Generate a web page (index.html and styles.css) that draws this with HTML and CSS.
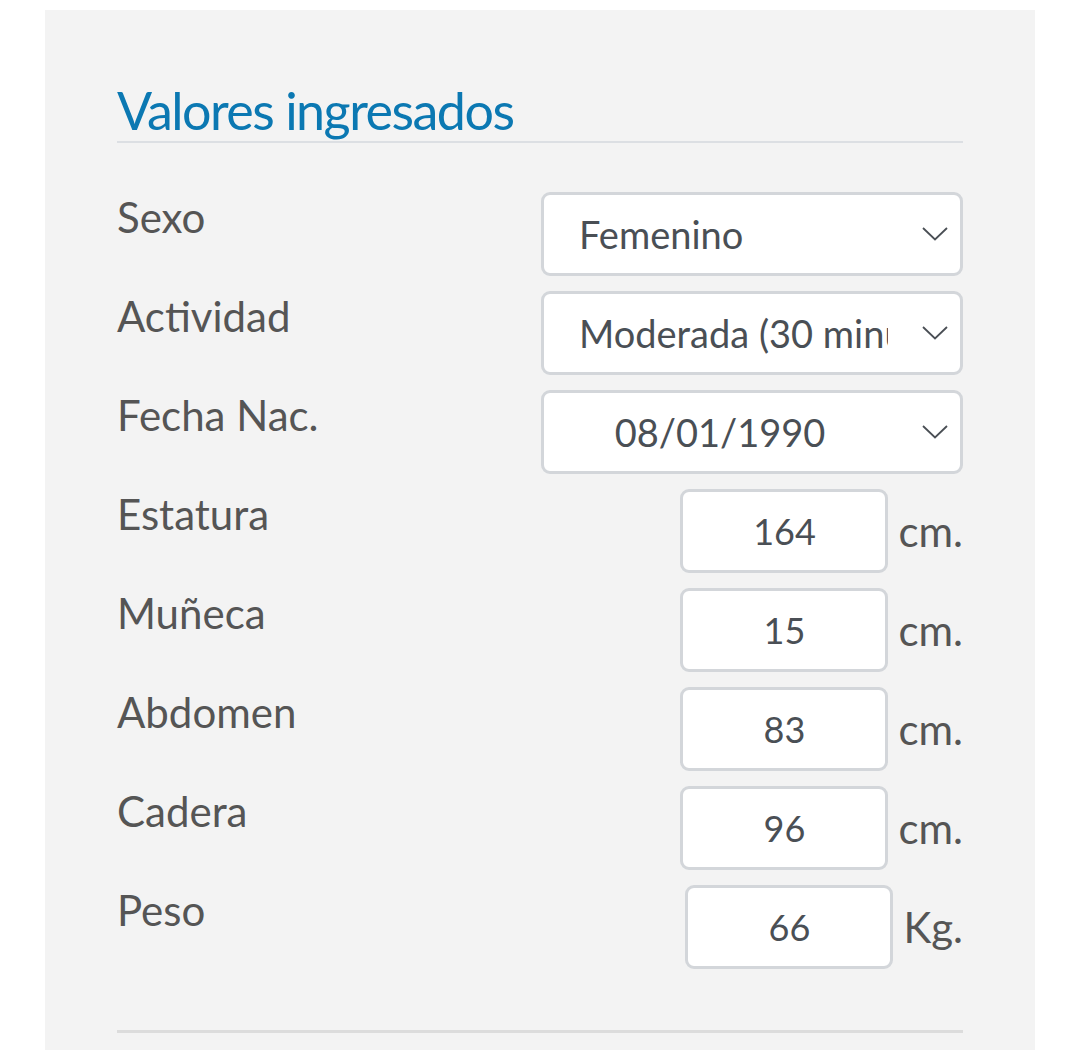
FILE: index.html
```html
<!DOCTYPE html>
<html lang="es">
<head>
<meta charset="utf-8">
<title>Valores ingresados</title>
<link rel="stylesheet" href="styles.css">
</head>
<body>
<div class="panel">
  <h2 class="title">Valores ingresados</h2>
  <div class="rows">
    <div class="row">
      <div class="label">Sexo</div>
      <div class="select">
        <span class="select-text">Femenino</span>
        <svg class="chev" width="26" height="14" viewBox="0 0 26 14"><path d="M1 1 L13 12.5 L25 1" fill="none" stroke="#4a4f55" stroke-width="1.8"/></svg>
      </div>
    </div>
    <div class="row">
      <div class="label">Actividad</div>
      <div class="select">
        <span class="select-text">Moderada (30 minutos diarios)</span>
        <svg class="chev" width="26" height="14" viewBox="0 0 26 14"><path d="M1 1 L13 12.5 L25 1" fill="none" stroke="#4a4f55" stroke-width="1.8"/></svg>
      </div>
    </div>
    <div class="row">
      <div class="label">Fecha Nac.</div>
      <div class="select">
        <span class="select-text date">08/01/1990</span>
        <svg class="chev" width="26" height="14" viewBox="0 0 26 14"><path d="M1 1 L13 12.5 L25 1" fill="none" stroke="#4a4f55" stroke-width="1.8"/></svg>
      </div>
    </div>
    <div class="row">
      <div class="label">Estatura</div>
      <div class="field"><div class="input">164</div><span class="unit">cm.</span></div>
    </div>
    <div class="row">
      <div class="label">Muñeca</div>
      <div class="field"><div class="input">15</div><span class="unit">cm.</span></div>
    </div>
    <div class="row">
      <div class="label">Abdomen</div>
      <div class="field"><div class="input">83</div><span class="unit">cm.</span></div>
    </div>
    <div class="row">
      <div class="label">Cadera</div>
      <div class="field"><div class="input">96</div><span class="unit">cm.</span></div>
    </div>
    <div class="row">
      <div class="label">Peso</div>
      <div class="field"><div class="input">66</div><span class="unit">Kg.</span></div>
    </div>
  </div>
  <div class="footer-line"></div>
</div>
</body>
</html>
```
FILE: styles.css
```css
html, body {
  margin: 0;
  padding: 0;
  background: #ffffff;
}
body {
  font-family: Lato, "Open Sans", sans-serif;
}
.panel {
  margin: 10px 45px 0 45px;
  background: #f3f3f3;
  padding: 69px 72px 20px 72px;
  min-height: 1040px;
  box-sizing: border-box;
}
.title {
  margin: 0;
  font-size: 52px;
  font-weight: 400;
  letter-spacing: -1.5px;
  color: #0b78b2;
  line-height: 62px;
  border-bottom: 2px solid #dcdfe3;
}
.rows {
  margin-top: 49px;
  display: flex;
  flex-direction: column;
  gap: 15px;
}
.row {
  display: flex;
  justify-content: space-between;
  align-items: flex-start;
  height: 84px;
}
.label {
  font-size: 42px;
  color: #555555;
  line-height: 48px;
  padding-top: 1px;
}
.select {
  width: 422px;
  height: 84px;
  box-sizing: border-box;
  background: #ffffff;
  border: 3px solid #d3d6da;
  border-radius: 9px;
  display: flex;
  align-items: center;
  padding-left: 35px;
  padding-right: 12px;
}
.select-text {
  font-size: 38px;
  color: #4a4f55;
  width: 309px;
  white-space: nowrap;
  overflow: hidden;
  flex: none;
}
.select-text.date {
  text-align: center;
  width: 282px;
}
.chev {
  margin-left: auto;
  flex: none;
}
.field {
  display: flex;
  align-items: center;
  gap: 10px;
}
.input {
  width: 208px;
  height: 84px;
  box-sizing: border-box;
  background: #ffffff;
  border: 3px solid #d3d6da;
  border-radius: 9px;
  display: flex;
  align-items: center;
  justify-content: center;
  font-size: 36px;
  color: #4a4f55;
}
.unit {
  font-size: 42px;
  color: #555555;
}
.footer-line {
  margin-top: 61px;
  height: 3px;
  background: #dcdcdc;
}
```
